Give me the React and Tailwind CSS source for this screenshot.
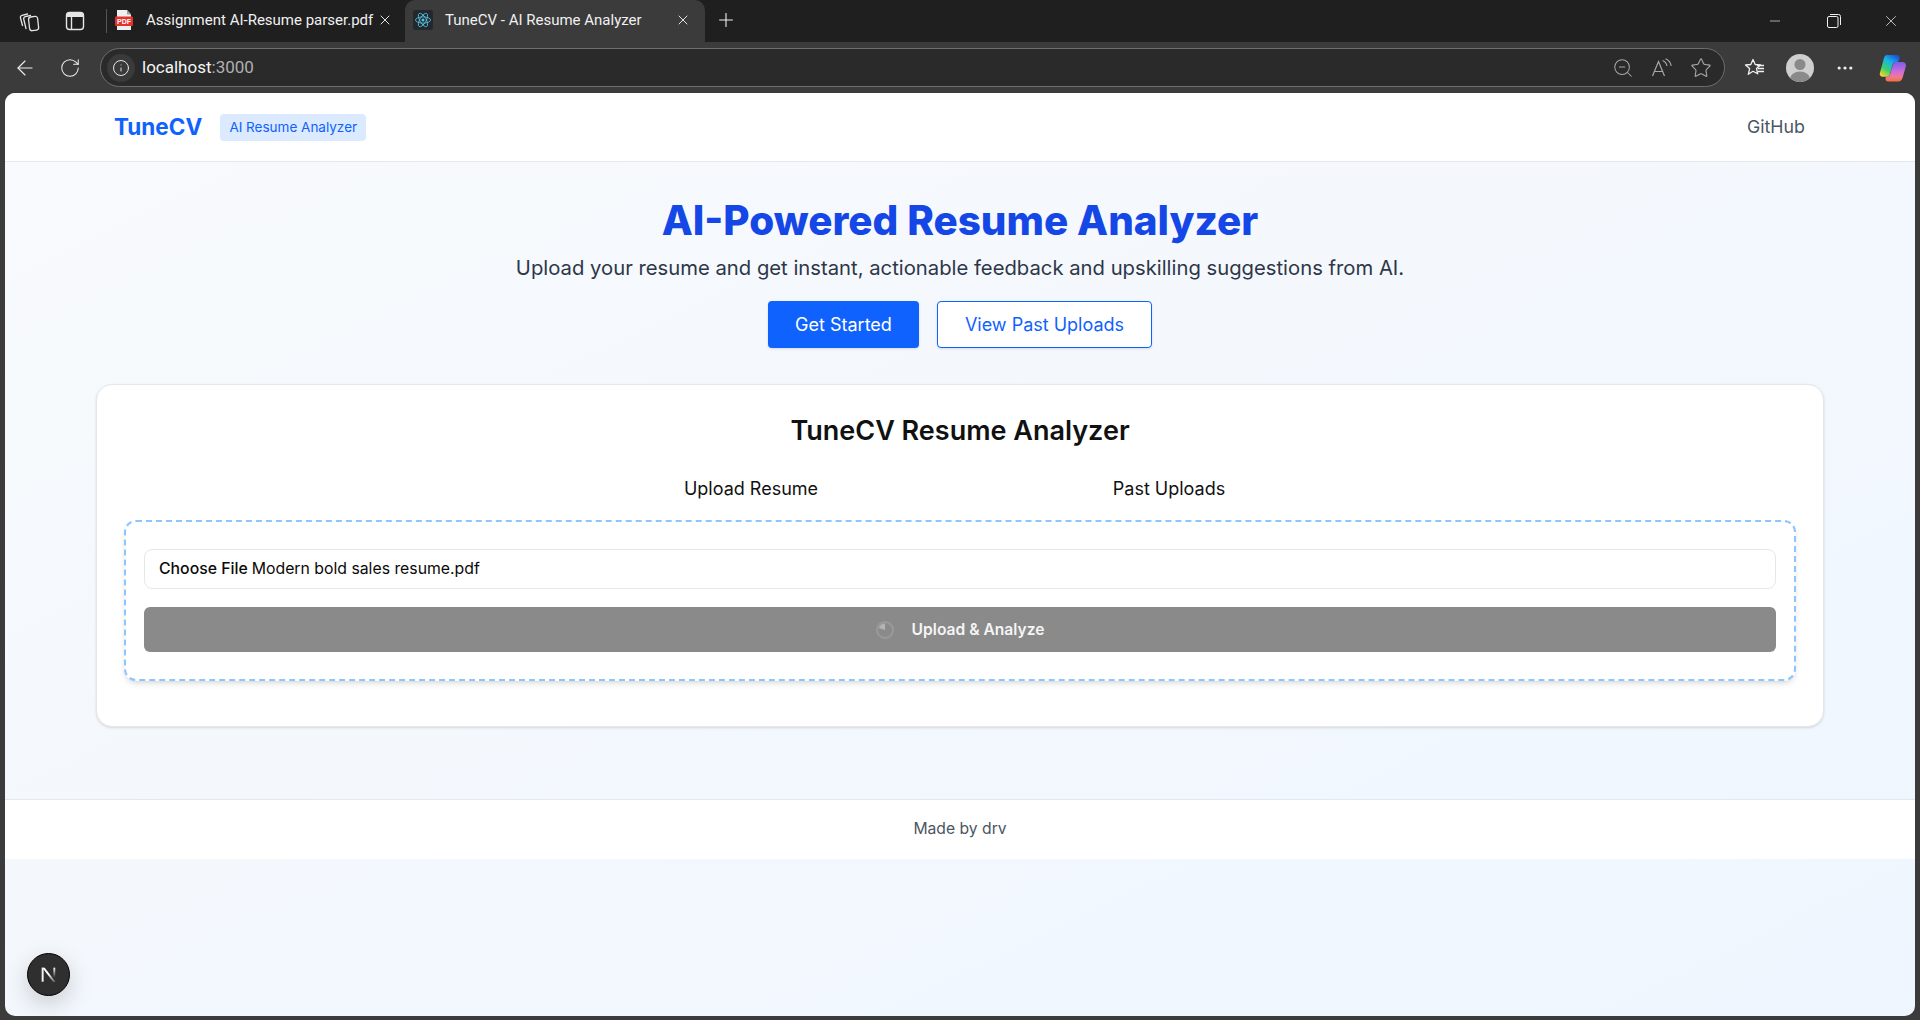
import React from "react";
import { X, Plus, ArrowLeft, RotateCw, Info, ZoomOut, Star, Minus, MoreHorizontal } from "lucide-react";

const font = { fontFamily: "Inter, 'Noto Sans', sans-serif" };

function PdfIcon() {
  return (
    <svg width="20" height="22" viewBox="0 0 20 22" className="shrink-0">
      <path d="M3 1h10l4 4.500V21H3z" fill="#f0f0f0" />
      <path d="M13 1l4 4.500h-4z" fill="#a0a0a0" />
      <rect x="1" y="7.500" width="18" height="9.500" rx="1" fill="#e5322d" />
      <text x="10" y="14.800" textAnchor="middle" fontSize="7" fontWeight="700" fill="#fff" fontFamily="Liberation Sans, sans-serif">PDF</text>
    </svg>
  );
}

function ReactIcon() {
  return (
    <div className="flex h-[20px] w-[20px] shrink-0 items-center justify-center rounded-[3px] bg-[#23272f]">
      <svg width="18" height="18" viewBox="-12 -12 24 24" fill="none" stroke="#58c4dc" strokeWidth="1.1">
        <circle r="2" fill="#58c4dc" stroke="none" />
        <ellipse rx="10" ry="4.2" />
        <ellipse rx="10" ry="4.2" transform="rotate(60)" />
        <ellipse rx="10" ry="4.2" transform="rotate(120)" />
      </svg>
    </div>
  );
}

function WorkspacesIcon() {
  return (
    <svg width="22" height="22" viewBox="0 0 22 22" fill="none" stroke="#e6e6e6" strokeWidth="1.300" strokeLinecap="round">
      <path d="M4.500 15.500L2.500 8c-.4-1.400.3-2.400 1.500-2.700L9.500 4" />
      <path d="M8 18.500L5.800 9.500c-.4-1.500.3-2.500 1.500-2.800l5.200-1.200" />
      <path d="M10.600 9.800c-.2-1.600.6-2.600 2-2.800l4.300-.6c1.500-.2 2.500.6 2.700 2l1 9c.2 1.500-.6 2.500-2 2.700l-4.300.6c-1.500.2-2.500-.6-2.700-2z" />
    </svg>
  );
}

function VerticalTabsIcon() {
  return (
    <svg width="20" height="20" viewBox="0 0 20 20" fill="none" stroke="#e6e6e6" strokeWidth="1.400">
      <rect x="1.500" y="1.500" width="17" height="17" rx="3" />
      <path d="M6.500 6v12.500" />
      <path d="M1.500 4.500a3 3 0 0 1 3-3h11a3 3 0 0 1 3 3v1.500h-17z" fill="#e6e6e6" stroke="none" />
    </svg>
  );
}

function RestoreIcon() {
  return (
    <svg width="14" height="14" viewBox="0 0 14 14" fill="none" stroke="#f0f0f0" strokeWidth="1">
      <rect x="0.500" y="2.500" width="10.500" height="11" rx="1.500" />
      <path d="M3 .5h8.500A2 2 0 0 1 13.500 2.500V11" />
    </svg>
  );
}

function ReadAloudIcon() {
  return (
    <svg width="22" height="20" viewBox="0 0 22 20" fill="none" stroke="#a8a8a8" strokeWidth="1.200">
      <path d="M1.500 18L7.500 3.500 13.500 18M3.500 13.500h8" />
      <path d="M11.500 2.500c2.500 1 4 3 4.500 5.500M14.500.8c3 1.200 5 3.700 5.700 7" />
    </svg>
  );
}

function FavoritesIcon() {
  return (
    <svg width="22" height="20" viewBox="0 0 22 20" fill="none" stroke="#f0f0f0" strokeWidth="1.300" strokeLinejoin="round">
      <path d="M9 1.500l2.200 5 5.300.5-4 3.500 1.200 5.300L9 13.300l-4.700 3 1.300-5.700L1.500 7l5.300-.5z" />
      <path d="M13 7.500h7M14 10.500h6M14 13.500h6" />
    </svg>
  );
}

function Avatar() {
  return (
    <div className="h-[28px] w-[28px] overflow-hidden rounded-full bg-[#cfcfcf]">
      <svg width="28" height="28" viewBox="0 0 28 28">
        <circle cx="14" cy="10.500" r="5.500" fill="#8a8a8a" />
        <ellipse cx="14" cy="25" rx="10" ry="7.500" fill="#8a8a8a" />
      </svg>
    </div>
  );
}

function Copilot() {
  return (
    <svg width="28" height="30" viewBox="0 0 28 30">
      <defs>
        <linearGradient id="cpa" x1="0.800" y1="0" x2="0.200" y2="1">
          <stop offset="0" stopColor="#1b4fd8" />
          <stop offset="0.350" stopColor="#18b4e8" />
          <stop offset="0.700" stopColor="#3ecf6a" />
          <stop offset="1" stopColor="#f4d430" />
        </linearGradient>
        <linearGradient id="cpb" x1="0.500" y1="0" x2="0.500" y2="1">
          <stop offset="0" stopColor="#7a5ce8" />
          <stop offset="0.450" stopColor="#c86ae0" />
          <stop offset="0.750" stopColor="#f0789a" />
          <stop offset="1" stopColor="#f4703c" />
        </linearGradient>
      </defs>
      <path d="M8 2h10c2.500 0 3 1.500 2.500 3.500L19 9h-2c-2 0-3 1-3.500 3L11 21c-.6 2-2 2.800-4 2.800H4c-2.500 0-3.800-1.800-3-4.300L5 5c.6-2 1.500-3 3-3z" fill="url(#cpa)" />
      <path d="M17 9h6c3 0 4.500 2 3.800 4.500L23.500 25c-.7 2.500-2.300 3.500-4.500 3.500H9.500c-2.500 0-3.500-1.500-2.800-3.800L7 23.800c2.200 0 3.500-.8 4.200-2.800l2.600-9c.5-2 1.400-3 3.200-3z" fill="url(#cpb)" />
    </svg>
  );
}

function NextMark() {
  return (
    <svg width="22" height="22" viewBox="0 0 18 18">
      <defs>
        <linearGradient id="nd" x1="0" y1="0" x2="1" y2="1">
          <stop offset="0.450" stopColor="#fff" />
          <stop offset="1" stopColor="#fff" stopOpacity="0.150" />
        </linearGradient>
        <linearGradient id="nr" x1="0" y1="0" x2="0" y2="1">
          <stop offset="0" stopColor="#fff" />
          <stop offset="0.900" stopColor="#fff" stopOpacity="0" />
        </linearGradient>
      </defs>
      <rect x="3" y="3" width="1.600" height="11.500" fill="#f2f2f2" />
      <path d="M3.500 3h2l9 11.800H12.500z" fill="url(#nd)" />
      <rect x="12.600" y="3" width="1.500" height="9" fill="url(#nr)" />
    </svg>
  );
}

function Spinner() {
  return (
    <svg width="18" height="18" viewBox="0 0 18 18" className="shrink-0">
      <circle cx="9" cy="9" r="8" fill="none" stroke="#9a9a9a" strokeWidth="2" />
      <path d="M9 9V2.500A6.500 6.500 0 0 0 2.800 7z" fill="#b4b4b4" />
    </svg>
  );
}

function BrowserChrome() {
  const tabFont = { fontFamily: "Roboto, 'Noto Sans', sans-serif" };
  return (
    <>
      <div className="flex h-[42px] shrink-0 items-center bg-[#1f1f1f]">
        <div className="flex w-[40px] justify-end pb-[1px]"><WorkspacesIcon /></div>
        <div className="ml-[25px] pb-[1px]"><VerticalTabsIcon /></div>
        <div className="ml-[21px] h-[24px] w-px bg-[#555]" />
        <div className="flex h-[42px] w-[298px] items-center pb-[2px] pl-[7px] pr-[12px]">
          <PdfIcon />
          <span className="ml-[12px] min-w-0 flex-1 whitespace-nowrap text-[15px] text-[#f0f0f0]" style={tabFont}>Assignment AI-Resume parser.pdf</span>
          <X size={16} strokeWidth={1.400} className="ml-[3px] shrink-0 text-[#f0f0f0]" />
        </div>
        <div className="flex h-[42px] w-[300px] items-center rounded-t-[10px] bg-[#3b3b3b] pb-[2px] pl-[8px] pr-[14px]">
          <ReactIcon />
          <span className="ml-[12px] min-w-0 flex-1 overflow-hidden whitespace-nowrap text-[15px] text-[#f0f0f0]" style={tabFont}>TuneCV - AI Resume Analyzer</span>
          <X size={16} strokeWidth={1.400} className="ml-[8px] shrink-0 text-[#f0f0f0]" />
        </div>
        <Plus size={22} strokeWidth={1.200} className="mb-[3px] ml-[10px] text-[#f0f0f0]" />
        <div className="ml-auto flex items-center pb-[1px]">
          <div className="flex w-[62px] justify-center"><Minus size={16} strokeWidth={1} className="text-[#f0f0f0]" /></div>
          <div className="flex w-[55px] justify-center"><RestoreIcon /></div>
          <div className="flex w-[59px] justify-center"><X size={18} strokeWidth={1} className="text-[#f0f0f0]" /></div>
        </div>
      </div>
      <div className="flex h-[51px] shrink-0 items-center bg-[#3b3b3b]">
        <div className="flex w-[37px] justify-end"><ArrowLeft size={24} strokeWidth={1.100} className="text-[#efefef]" /></div>
        <div className="ml-[22px]"><RotateCw size={22} strokeWidth={1.100} className="text-[#efefef]" /></div>
        <div className="ml-[19px] flex h-[39px] w-[1625px] items-center rounded-[20px] border border-[#6e6e6e] bg-[#2a2a2a] pl-[6px] pr-[12px]">
          <div className="flex h-[28px] w-[28px] items-center justify-center rounded-full bg-[#3a3a3a]"><Info size={18} strokeWidth={1.300} className="text-[#e8e8e8]" /></div>
          <span className="ml-[7px] text-[17px] text-[#f4f4f4]" style={{ fontFamily: "Roboto, sans-serif" }}>localhost<span className="text-[#b0b0b0]">:3000</span></span>
          <div className="ml-auto flex items-center gap-[17px]">
            <ZoomOut size={22} strokeWidth={1.100} className="text-[#a8a8a8]" />
            <ReadAloudIcon />
            <Star size={22} strokeWidth={1.200} className="text-[#a8a8a8]" />
          </div>
        </div>
        <div className="ml-[19px]"><FavoritesIcon /></div>
        <div className="ml-[20px]"><Avatar /></div>
        <div className="ml-[21px]"><MoreHorizontal size={20} strokeWidth={1.800} className="text-[#f0f0f0]" /></div>
        <div className="ml-[24px]"><Copilot /></div>
      </div>
    </>
  );
}

export default function App() {
  return (
    <div className="flex h-[1020px] w-[1920px] flex-col overflow-hidden bg-[#3b3b3b]" style={font}>
      <BrowserChrome />
      <div className="relative mx-[5px] mb-[4px] flex flex-1 flex-col overflow-hidden rounded-[10px] bg-gradient-to-br from-[#f8fafc] to-[#eff6ff]">
        <header className="flex h-[69px] shrink-0 items-center justify-between border-b border-[#e5e7eb] bg-white pl-[109px] pr-[110px]">
          <div className="flex items-center gap-[18px]">
            <span className="text-[22.500px] font-bold text-[#0f62fe]">TuneCV</span>
            <span className="flex h-[27px] w-[146px] items-center justify-center rounded-[4px] bg-[#dbeafe] text-[13.500px] text-[#0f62fe]">AI Resume Analyzer</span>
          </div>
          <span className="text-[17.800px] text-[#4b5563]">GitHub</span>
        </header>
        <main className="flex flex-col items-center">
          <h1 className="mt-[34px] text-[40.400px] font-extrabold leading-[50px] text-[#1447e6]">AI-Powered Resume Analyzer</h1>
          <p className="mt-[8px] text-[20.250px] leading-[28px] text-[#2d3748]">Upload your resume and get instant, actionable feedback and upskilling suggestions from AI.</p>
          <div className="mt-[19px] flex gap-[18px]">
            <button className="h-[47px] w-[151px] rounded-[4px] bg-[#0f62fe] text-[18px] text-white shadow-sm">Get Started</button>
            <button className="h-[47px] w-[215px] rounded-[4px] border border-[#0f62fe] bg-white text-[18px] text-[#0f62fe] shadow-sm">View Past Uploads</button>
          </div>
          <section className="mt-[36px] h-[343px] w-[1728px] rounded-[16px] border border-[#e5e7eb] bg-white px-[27px] shadow-sm">
            <h2 className="mt-[28px] text-center text-[27px] font-semibold leading-[36px] text-[#111]">TuneCV Resume Analyzer</h2>
            <div className="mt-[26px] flex justify-center">
              <span className="w-[418px] text-center text-[18px] leading-[28px] text-[#111]">Upload Resume</span>
              <span className="w-[418px] text-center text-[18px] leading-[28px] text-[#111]">Past Uploads</span>
            </div>
            <div className="mt-[17px] h-[161px] rounded-[12px] border-2 border-dashed border-[#8ec5ff] bg-white px-[18px] pt-[27px] shadow-md">
              <div className="flex h-[40px] items-center rounded-[8px] border border-[#e5e7eb] px-[14px] text-[15.800px] text-[#0a0a0a]">
                <span className="mr-[4px] font-medium">Choose File</span>
                <span>Modern bold sales resume.pdf</span>
              </div>
              <button className="mt-[18px] flex h-[45px] w-full items-center justify-center gap-[18px] rounded-[6px] bg-[#8a8a8a] text-[15.600px] font-semibold text-[#f5f5f5]">
                <Spinner />
                <span>Upload &amp; Analyze</span>
              </button>
            </div>
          </section>
        </main>
        <footer className="mt-[72px] flex h-[60px] shrink-0 items-center justify-center border-t border-[#e5e7eb] bg-white pb-[2px] text-[15.700px] text-[#4b5563]">Made by drv</footer>
        <div className="absolute bottom-[20px] left-[22px] flex h-[43px] w-[43px] items-center justify-center rounded-full border border-black bg-[#2f2f2f] shadow-[0_8px_24px_rgba(0,0,0,0.18)]">
          <NextMark />
        </div>
      </div>
    </div>
  );
}
